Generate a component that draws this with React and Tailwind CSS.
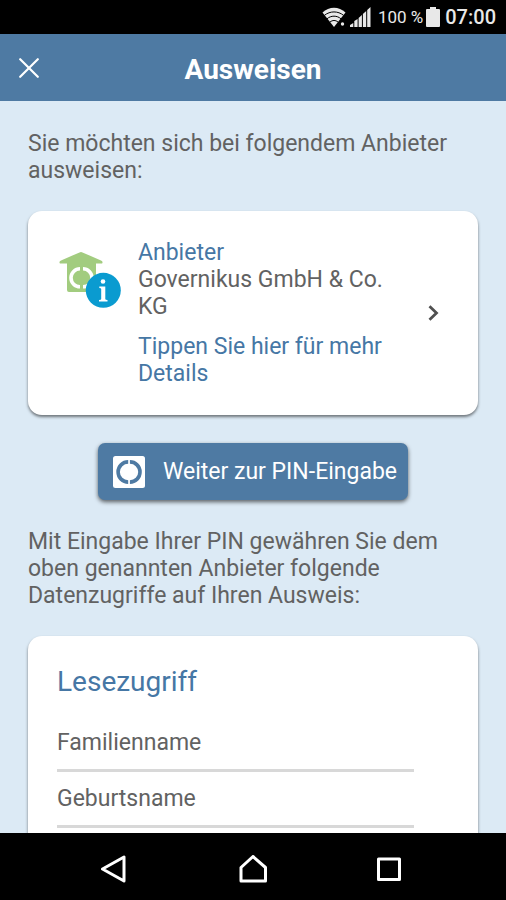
const readAccess = ['Familienname', 'Geburtsname']

function StatusBar() {
  return (
    <div className="flex h-[34px] shrink-0 items-center justify-end bg-black pr-[10px] text-[#e8e8e8]">
      <svg className="h-[22px] w-6" viewBox="0 0 24 22" fill="none" aria-hidden="true">
        <path d="M0.500 6.500C7 0 17 0 23.500 6.500L12 21Z" fill="#e8e8e8" />
        <path d="M2.500 9.300C8 4.800 16 4.800 21.500 9.300M5 12.800C9 9.300 15 9.300 19 12.800M8 16C10.500 14 13.500 14 16 16" stroke="#000" strokeWidth="1" />
        <circle cx="20.500" cy="18" r="3" fill="#000" />
        <circle cx="20.500" cy="18" r="1.700" fill="#e8e8e8" />
      </svg>
      <svg className="ml-1 h-[20px] w-[21px]" viewBox="0 0 21 20" fill="currentColor" aria-hidden="true">
        <path d="M0 20v-2l3.300-2v4zM4.300 20v-6l3.300-2v8zM8.600 20V11l3.300-3v12zM12.900 20V7l3.300-3v16zM17.200 20V3L20.500 0v20z" />
      </svg>
      <span className="ml-[7px] text-[17px] leading-5">100 %</span>
      <svg className="ml-[3px] h-[20px] w-[14px]" viewBox="0 0 14 20" fill="currentColor" aria-hidden="true">
        <path d="M4 0h6v2h3q1 0 1 1v16q0 1-1 1H1q-1 0-1-1V3q0-1 1-1h3z" />
      </svg>
      <span className="ml-[5px] text-[20px] leading-5 font-medium">07:00</span>
    </div>
  )
}

function Header() {
  return (
    <header className="grid h-[67px] shrink-0 grid-cols-[57px_1fr_57px] items-center bg-[#4e7aa3] text-white">
      <button type="button" aria-label="Schließen" className="flex h-full items-center justify-center">
        <svg className="size-5" viewBox="0 0 20 20" fill="none" stroke="currentColor" strokeWidth="2.200" strokeLinecap="round">
          <path d="M1.200 1.200l17.600 17.600M18.800 1.200l-17.600 17.600" />
        </svg>
      </button>
      <h1 className="pt-1 text-center text-[28px] leading-8 font-bold">Ausweisen</h1>
    </header>
  )
}

function ProviderIcon() {
  return (
    <svg className="h-[70px] w-16 shrink-0" viewBox="0 0 64 70" aria-hidden="true">
      <path d="M3 24.500Q1.500 22.500 4 21.500L22.500 13.400Q24 12.700 25.500 13.400L44 21.500Q46.500 22.500 45 24.500H39V51q0 2-2 2H12q-2 0-2-2V24.500Z" fill="#a2cc7f" />
      <g fill="none" stroke="#fff" strokeWidth="3.600">
        <path d="M23 29.800a9 9 0 0 0 0 18" />
        <path d="M26 29.800a9 9 0 0 1 0 18" />
      </g>
      <circle cx="46.300" cy="51.300" r="17.500" fill="#0a9bd0" />
      <circle cx="46" cy="42.500" r="2.300" fill="#fff" />
      <path d="M42.300 47.500h6v12.500q0 1 2.200 1v1.500h-8.500v-1.500q2.200 0 2.200-1v-10q0-1-1.900-1z" fill="#fff" />
    </svg>
  )
}

function IdLogo() {
  return (
    <svg className="size-8 shrink-0" viewBox="0 0 32 32" aria-hidden="true">
      <rect width="32" height="32" rx="2.500" fill="#fff" />
      <g fill="none" stroke="#4e7aa3" strokeWidth="3.600">
        <path d="M15.200 5.900a10.100 10.100 0 0 0 0 20.200" />
        <path d="M16.900 5.900a10.100 10.100 0 0 1 0 20.200" />
      </g>
    </svg>
  )
}

function ProviderCard() {
  return (
    <button
      type="button"
      className="mt-[27px] flex w-full items-center rounded-[14px] bg-white py-[28px] pr-[39px] pl-[29px] text-left shadow-[0_2px_3px_rgba(0,0,0,0.5)]"
    >
      <span className="self-start">
        <ProviderIcon />
      </span>
      <span className="ml-[17px] flex-1 pr-8">
        <span className="block text-[#4677a5]">Anbieter</span>
        <span className="block">Governikus GmbH &amp; Co. KG</span>
        <span className="mt-[13px] block text-[#4677a5]">Tippen Sie hier für mehr Details</span>
      </span>
      <svg className="h-4 w-[11px] shrink-0" viewBox="0 0 11 16" fill="none" stroke="#505050" strokeWidth="2.800" aria-hidden="true">
        <path d="M1.500 1.200L8.500 8L1.500 14.800" />
      </svg>
    </button>
  )
}

function NavigationBar() {
  return (
    <nav className="flex h-[67px] shrink-0 items-center justify-center gap-[109px] bg-black pt-1 text-white">
      <button type="button" aria-label="Zurück">
        <svg className="size-7" viewBox="0 0 28 28" fill="none" stroke="currentColor" strokeWidth="3" strokeLinejoin="round">
          <path d="M23 2v24L1.500 14z" />
        </svg>
      </button>
      <button type="button" aria-label="Startseite">
        <svg className="h-7 w-[30px]" viewBox="0 0 30 28" fill="none" stroke="currentColor" strokeWidth="3" strokeLinejoin="round">
          <path d="M15 1.500L3 12.500v13.500h24.500V12.500z" />
        </svg>
      </button>
      <button type="button" aria-label="Übersicht">
        <svg className="size-7" viewBox="0 0 28 28" fill="none" stroke="currentColor" strokeWidth="3" strokeLinejoin="round">
          <rect x="1.500" y="4" width="21" height="20.500" />
        </svg>
      </button>
    </nav>
  )
}

function App() {
  return (
    <div className="flex h-screen flex-col bg-[#dceaf5] font-['Roboto',sans-serif] text-[23px] leading-[27px] text-[#626262]">
      <StatusBar />
      <Header />

      <main className="min-h-0 flex-1 overflow-hidden px-7 pt-[29px]">
        <p>Sie möchten sich bei folgendem Anbieter ausweisen:</p>

        <ProviderCard />

        <button
          type="button"
          className="mx-auto mt-7 flex h-[57px] items-center gap-[18px] rounded-[7px] bg-[#4e7aa3] pr-[11px] pl-[15px] text-white shadow-[0_2px_4px_rgba(0,0,0,0.6)]"
        >
          <IdLogo />
          Weiter zur PIN-Eingabe
        </button>

        <p className="mt-7">
          Mit Eingabe Ihrer PIN gewähren Sie dem oben genannten Anbieter folgende Datenzugriffe auf Ihren Ausweis:
        </p>

        <section className="mt-[27px] rounded-[14px] bg-white pt-[30px] pr-16 pb-8 pl-[29px] shadow-[0_2px_3px_rgba(0,0,0,0.5)]">
          <h2 className="mb-[18px] text-[28px] leading-8 text-[#4677a5]">Lesezugriff</h2>
          <ul>
            {readAccess.map((name) => (
              <li key={name} className="flex h-14 items-center border-b-3 border-[#d8d8d8]">
                {name}
              </li>
            ))}
          </ul>
        </section>
      </main>

      <NavigationBar />
    </div>
  )
}

export default App
